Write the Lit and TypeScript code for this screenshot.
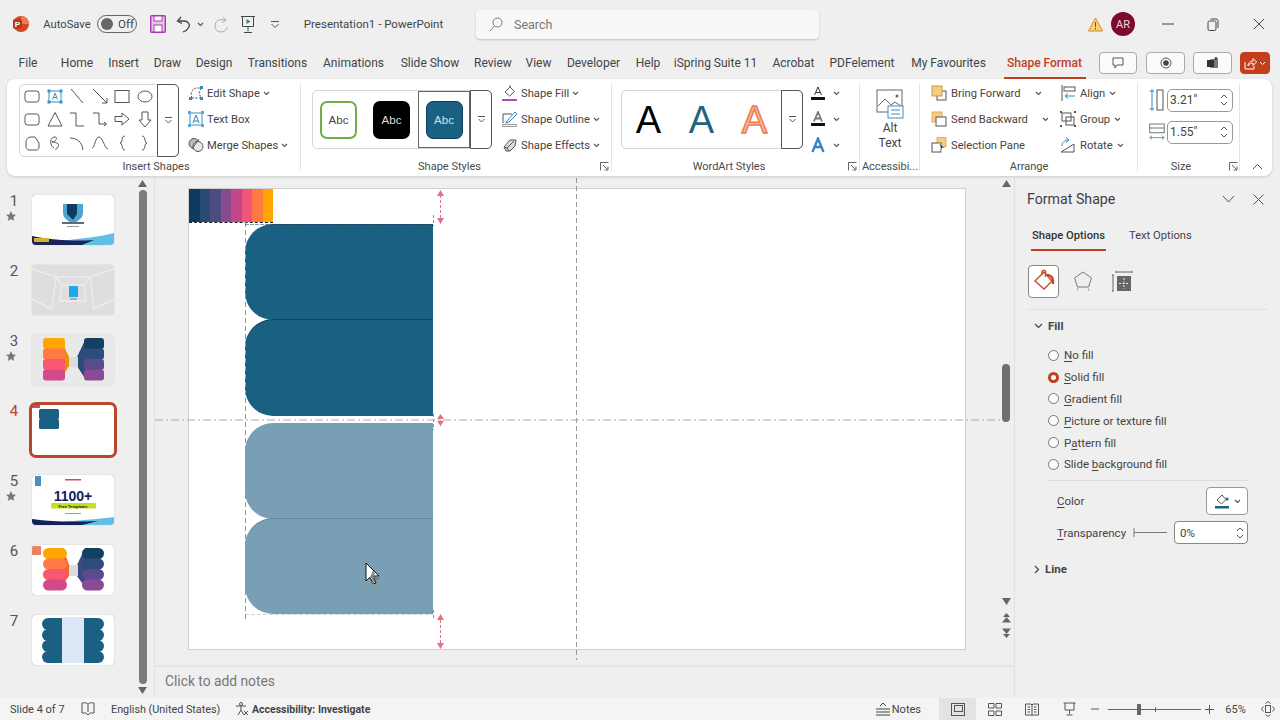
import { LitElement, html, css, svg } from "lit";
import { customElement } from "lit/decorators.js";

const ic = (w: number, h: number, body: unknown) =>
  html`<svg width=${w} height=${h} viewBox="0 0 ${w} ${h}" fill="none" stroke="#555" stroke-width="1">${body}</svg>`;

const caret = html`<svg class="caret" width="7" height="5" viewBox="0 0 7 5" fill="none" stroke="#555" stroke-width="1.1"><path d="M1 1l2.5 2.5L6 1" /></svg>`;
const more = html`<svg width="9" height="9" viewBox="0 0 9 9" fill="none" stroke="#555"><path d="M1 1.5h7M1.5 4l3 3 3-3" /></svg>`;
const launcher = html`<svg class="launch" width="9" height="9" viewBox="0 0 9 9" fill="none" stroke="#666"><path d="M.5 8.5v-8h8M3 3l5 5M8 4.5V8H4.5" /></svg>`;

const shapeIcons = [
  svg`<rect x="2" y="4" width="14" height="11" rx="2.5" />`,
  svg`<rect x="3" y="4" width="12" height="11" stroke="#3b8fc4" /><path d="M6.5 12.5L9 6l2.5 6.5M7.5 10.5h3" stroke="#3b8fc4" /><path d="M1.5 2.5h3v3h-3zM13.5 2.5h3v3h-3zM1.5 13.5h3v3h-3zM13.5 13.5h3v3h-3z" fill="#3b8fc4" stroke="none" />`,
  svg`<path d="M3 2l12 14" />`,
  svg`<path d="M2 2l14 14M16 11v5h-5" />`,
  svg`<rect x="2" y="3.500" width="14" height="12" />`,
  svg`<ellipse cx="9" cy="9.500" rx="7" ry="5.500" />`,
  svg`<rect x="2" y="4" width="14" height="11" rx="2.500" />`,
  svg`<path d="M9 2.500L16 16H2z" />`,
  svg`<path d="M2 3h6v13h8" />`,
  svg`<path d="M2 3h6v11h7M13 12l2.500 2-2.500 2" />`,
  svg`<path d="M2 6.500h7V3l7 6-7 6v-3.500H2z" />`,
  svg`<path d="M6 2h6v8h3l-6 7-6-7h3z" />`,
  svg`<path d="M3 9c0-4 2-6 5-6h4l4 6v4c0 2-1 3-3 3H6c-2 0-3-2-3-4z" />`,
  svg`<path d="M8 14C3 11 4 3 9 3c3 0 1 5-3 5 3 0 8 1 6 5-1 2-3 1-2 3" />`,
  svg`<path d="M2 4c7 0 12 4 13 12" />`,
  svg`<path d="M1 14C4 14 4 3 8 3s5 11 9 12" />`,
  svg`<path d="M12 2c-4 0-2 7-5 7 3 0 1 7 5 7" />`,
  svg`<path d="M6 2c4 0 2 7 5 7-3 0-1 7-5 7" />`,
];

const icons = {
  editShape: ic(16, 16, svg`<path d="M4 13C2 8 4 4 8 3h5l-2 5 2 5z" stroke-dasharray="2 1.500" /><path d="M1 12h3v3H1zM12 1h3v3h-3zM12 12h3v3h-3z" fill="#2f8ac2" stroke="none" />`),
  textBox: ic(16, 16, svg`<rect x="2" y="2" width="12" height="12" stroke="#3b8fc4" /><path d="M5 12l3-8 3 8M6 10h4" stroke="#3b7fb0" /><path d="M0 0h3v3H0zM13 0h3v3h-3zM0 13h3v3H0zM13 13h3v3h-3z" fill="#5aa7d6" stroke="none" />`),
  merge: ic(16, 16, svg`<circle cx="6" cy="6.500" r="5" fill="#bbb" /><circle cx="10" cy="9.500" r="5" fill="#e8e8e8" /><path d="M4 12l7-10" />`),
  fill: ic(16, 16, svg`<path d="M3 7l5-5 4.500 4.500-5 4.500z" /><path d="M8 2V0" /><path d="M0 14h15v2H0z" fill="#b04bb4" stroke="none" />`),
  outline: ic(16, 16, svg`<path d="M1 12V3h9" /><path d="M5 10l8-9 2 2-8 8-3 1z" stroke="#2f8ac2" /><path d="M0.500 13.500h14v2h-14z" stroke="#999" />`),
  effects: ic(16, 16, svg`<path d="M2 10l6-7h6l-1 6-5 5H4z" fill="#ddd" /><path d="M2 10l3 1 2 3M5 11l7-7" />`),
  bring: ic(16, 16, svg`<rect x="6" y="6" width="9" height="9" /><rect x="1" y="1" width="10" height="10" fill="#f4cd85" stroke="#c99a3d" />`),
  send: ic(16, 16, svg`<rect x="1" y="1" width="10" height="10" fill="#f4cd85" stroke="#e2ad55" /><rect x="5" y="6" width="10" height="9" fill="#fff" />`),
  pane: ic(16, 16, svg`<rect x="6" y="0.500" width="9" height="9" fill="#f4cd85" stroke="#e2ad55" /><rect x="1" y="6" width="9" height="9" fill="#fff" /><path d="M8 6l6 5-3 0 0 4z" fill="#444" stroke="#fff" stroke-width=".5" />`),
  align: ic(16, 16, svg`<path d="M2 0v16" /><rect x="4" y="2" width="11" height="4" /><path d="M15 11H5M8 8.500L5 11l3 2.500" stroke="#2f8ac2" />`),
  group: ic(16, 16, svg`<rect x="2" y="2" width="9" height="8" /><rect x="6" y="6" width="8" height="8" /><path d="M0 0h2v2H0zM14 0h2v2h-2zM0 14h2v2H0zM14 14h2v2h-2z" fill="#555" stroke="none" />`),
  rotate: ic(16, 16, svg`<path d="M1 15L14 7v8z" /><path d="M2 9c0-4 3-6 6-6" stroke="#2f8ac2" /><path d="M6 0.500L9 3 6 5.500" stroke="#2f8ac2" />`),
  height: ic(16, 24, svg`<path d="M3 2v20M1 4l2-2.500L5 4M1 20l2 2.500L5 20" stroke="#2f8ac2" /><rect x="8" y="2" width="6" height="20" />`),
  width: ic(20, 22, svg`<rect x="1" y="1" width="18" height="11" /><path d="M1 6h18" /><path d="M1 18h18M4 15.500L1 18l3 2.500M16 15.500l3 2.500-3 2.500" stroke="#2f8ac2" />`),
};

const spin = html`<span class="spin">
  <svg width="8" height="5" viewBox="0 0 8 5" fill="none" stroke="#555"><path d="M1 4l3-3 3 3" /></svg>
  <svg width="8" height="5" viewBox="0 0 8 5" fill="none" stroke="#555"><path d="M1 1l3 3 3-3" /></svg>
</span>`;

const warm = ["#ffa600", "#ff7a45", "#f9566f", "#d24a8c"];
const cool = ["#123f62", "#2d4b7b", "#594b8d", "#8a4a96"];

const thumbs = [
  svg`<path d="M31 9h20v9c0 5-5 8-10 11-5-3-10-6-10-11z" fill="#4aa5d0" /><path d="M35 9h10v10l-4 6-6-6z" fill="#123a5c" /><rect x="30" y="27" width="22" height="2" fill="#667" /><rect x="35" y="31" width="12" height="1" fill="#99a" />
    <path d="M30 46C50 43 68 42 82 38V50H30z" fill="#5fc0e4" /><path d="M0 41C25 46 45 46 62 45L50 50H0z" fill="#1a2456" /><rect x="2" y="43" width="15" height="4" fill="#d8b02c" />`,
  svg`<rect width="82" height="50" fill="#dedede" /><path d="M0 4l24 8h34l24-8M24 12l-4 32M58 12l4 32M0 34l20 10M82 34L62 44M24 12l6 8h22l6-8M30 20l-2 16h26l-2-16" stroke="#ececec" stroke-width="1.500" fill="none" /><rect x="37" y="21" width="9" height="11" fill="#1ea7ea" /><rect x="38" y="33" width="7" height="2" fill="#aaa" />`,
  svg`<rect width="82" height="50" fill="#e9e9e9" />
    <path d="M28 3l9 19v9l-9 14z" fill="#e88e00" /><path d="M54 3l-9 19v9l9 14z" fill="#2d4b7b" />
    ${warm.map((c, i) => svg`<rect x="11" y=${3 + i * 10.5} width="22" height="11" rx="3" fill=${c} />`)}${cool.map((c, i) => svg`<rect x="52" y=${3 + i * 10.5} width="20" height="11" rx="3" fill=${c} />`)}
    <rect x="37" y="22" width="9" height="10" fill="#dcdcdc" />`,
  svg`<rect x="7" y="4" width="20" height="10" rx="1.500" fill="#1a6083" /><rect x="7" y="14" width="20" height="10" rx="1.500" fill="#1a6083" /><rect x="0" y="0" width="8" height="3" fill="#c0488a" />`,
  svg`<rect x="3" y="1" width="6" height="10" fill="#4a8fc0" /><rect x="33" y="4" width="16" height="1.500" fill="#e0455f" /><text x="41" y="26" text-anchor="middle" font-size="14" font-weight="700" font-family="Liberation Sans, sans-serif" fill="#14205c">1100+</text><rect x="19" y="28" width="45" height="5.500" rx="1" fill="#c4e020" /><text x="41" y="32.500" text-anchor="middle" font-size="4" font-weight="700" font-family="Liberation Sans, sans-serif" fill="#223">Free Templates</text><rect x="33" y="38" width="16" height="1" fill="#c88" />
    <path d="M30 47C50 45 68 44 82 42V50H30z" fill="#5fc0e4" /><path d="M0 44C20 47 45 47 66 46L50 50H0z" fill="#14205c" />`,
  svg`<path d="M27 3h4l6 17v11l-10 14z" fill="#f2652a" /><path d="M55 3h-2l-8 17v11l10 14z" fill="#3a4a84" />
    ${warm.map((c, i) => svg`<rect x="11" y=${3 + i * 10.5} width="24" height="11" rx="5.500" fill=${c} />`)}${cool.map((c, i) => svg`<rect x="50" y=${3 + i * 10.5} width="22" height="11" rx="5.500" fill=${c} />`)}
    <rect x="37" y="20" width="9" height="11" fill="#dcdcdc" /><rect x="0" y="1" width="9" height="9" fill="#ee7f62" />`,
  svg`${[0, 1, 2, 3].map((i) => svg`<rect x="10" y=${3 + i * 11} width="26" height="12" rx="6" fill="#1a6083" /><rect x="46" y=${3 + i * 11} width="26" height="12" rx="6" fill="#1a6083" />`)}<rect x="30" y="2" width="22" height="46" fill="#dbe6f6" />`,
];

const stripes = ["#0f3a5f", "#2a4a75", "#4e4b82", "#8a4a92", "#c0488a", "#f0567a", "#ff7a40", "#ffa600"];
const stars = [true, false, true, false, true, false, false];

const tabs = [
  ["File", 50], ["Home", 48], ["Insert", 45], ["Draw", 43], ["Design", 50], ["Transitions", 77],
  ["Animations", 75], ["Slide Show", 78], ["Review", 48], ["View", 43], ["Developer", 67], ["Help", 42],
  ["iSpring Suite 11", 93], ["Acrobat", 63], ["PDFelement", 74], ["My Favourites", 99], ["Shape Format", 93],
] as const;

@customElement("app-root")
class AppRoot extends LitElement {
  static styles = css`
    :host {
      display: block;
      width: 1280px;
      height: 720px;
      overflow: hidden;
      background: #efefef;
      color: #444;
      font-family: Roboto, "Noto Sans", sans-serif;
      font-size: 12px;
    }
    svg { display: block; flex: none; }
    u { text-underline-offset: 2px; }

    .titlebar {
      height: 48px;
      margin-bottom: 1px;
      display: grid;
      grid-template-columns: 42px 50px 50px 32px 20px 12px 30px 24px 30px 167px 19px 343px 260px 32px 24px 66px 24px 13px 42px;
      align-items: center;
      justify-items: center;
      font-size: 11.5px;
    }
    .autosave { font-size: 11.200px; }
    .search {
      justify-self: stretch;
      height: 29px;
      background: #f8f8f8;
      border-radius: 4px;
      box-shadow: 0 1px 2px rgba(0, 0, 0, 0.2);
      display: flex;
      align-items: center;
      gap: 11px;
      padding-left: 13px;
      color: #777;
      font-size: 12.500px;
    }
    .toggle {
      width: 40px;
      height: 18px;
      border: 1px solid #666;
      border-radius: 10px;
      display: flex;
      align-items: center;
      gap: 5px;
      padding-left: 3px;
      box-sizing: border-box;
      font-size: 11.5px;
    }
    .toggle i { width: 12px; height: 12px; background: #666; border-radius: 50%; }
    .avatar {
      width: 24px;
      height: 24px;
      border-radius: 50%;
      background: #7c0a2e;
      color: #e9d9de;
      font-size: 11px;
      display: flex;
      align-items: center;
      justify-content: center;
    }

    .tabrow { height: 30px; display: flex; align-items: flex-start; padding-left: 3px; }
    .tab { text-align: center; height: 30px; line-height: 28px; position: relative; white-space: nowrap; }
    .tab.active { color: #c0401f; font-weight: 500; }
    .tab.active::after {
      content: "";
      position: absolute;
      left: 6px;
      right: 5px;
      bottom: 0;
      height: 2px;
      background: #c0401f;
    }
    .topbtn {
      height: 22px;
      margin-top: 3px;
      background: #fbfbfb;
      border: 1px solid #a9a9a9;
      border-radius: 4px;
      box-sizing: border-box;
      display: flex;
      align-items: center;
      justify-content: center;
    }
    .b1 { width: 38px; margin-left: 8px; }
    .b2 { width: 39px; margin-left: 9px; }
    .b3 { width: 39px; margin-left: 8px; }
    .share { width: 30px; margin-left: 8px; background: #c43e1c; border-color: #c43e1c; gap: 2px; }

    .ribbon {
      margin: 0 8px 0 7px;
      height: 97px;
      background: #fff;
      border-radius: 8px;
      box-shadow: 0 1px 3px rgba(0, 0, 0, 0.16);
      display: flex;
      position: relative;
    }
    .group { position: relative; display: flex; flex-direction: column; flex: none; }
    .group::after {
      content: "";
      position: absolute;
      right: 0;
      top: 4px;
      bottom: 5px;
      width: 1px;
      background: #e4e4e4;
    }
    .g1 { width: 294px; }
    .g2 { width: 311px; }
    .g3 { width: 248px; }
    .g4 { width: 60px; }
    .g5 { width: 218px; }
    .g6 { width: 102px; }
    .gbody { height: 80px; display: flex; }
    .glabel { text-align: center; line-height: 16px; font-size: 11px; color: #4a4a4a; white-space: nowrap; }
    .g1 .glabel { padding-left: 4px; }
    .g2 .glabel, .g3 .glabel { padding-right: 14px; }
    .g6 .glabel { padding-right: 16px; }
    .launch { position: absolute; right: 3px; bottom: 5px; }
    .g6 .launch { right: 2px; }
    .collapse { position: absolute; right: 9px; bottom: 6px; }

    .gallery {
      border: 1px solid #d5d5d5;
      border-radius: 5px;
      box-sizing: border-box;
      display: flex;
      flex: none;
    }
    .g-shapes { margin: 5px 0 0 12px; width: 160px; height: 73px; }
    .shape-grid {
      width: 137px;
      margin-top: -1px;
      padding-left: 1px;
      display: grid;
      grid-template-columns: repeat(6, 22.500px);
      grid-auto-rows: 23.500px;
      align-items: center;
      justify-items: center;
    }
    .more {
      margin: -1px -1px -1px auto;
      width: 22px;
      flex: none;
      align-self: stretch;
      border: 1px solid #555;
      border-radius: 0 5px 5px 0;
      box-sizing: border-box;
      display: flex;
      align-items: center;
      justify-content: center;
    }
    .cmds { display: flex; flex-direction: column; margin-top: 1px; font-size: 11.200px; }
    .c1 { margin-left: 9px; }
    .c2 { margin-left: 10px; }
    .cmd { height: 26px; display: flex; align-items: center; gap: 3px; white-space: nowrap; }
    .far { margin-left: 10px; }
    .c5a { margin-left: 11px; width: 129px; }
    .c5 .cmd, .c5a .cmd { gap: 4px; }

    .g-styles { margin: 11px 0 0 11px; width: 180px; height: 59px; align-items: center; }
    .swatch {
      width: 37px;
      height: 38px;
      box-sizing: border-box;
      border-radius: 7px;
      display: flex;
      align-items: center;
      justify-content: center;
      font-family: "Liberation Sans", sans-serif;
      font-size: 11.500px;
      flex: none;
    }
    .sw1 { margin-left: 7px; border: 2px solid #70ad47; color: #444; }
    .sw2 { margin-left: 16px; background: #000; color: #ddd; }
    .sel {
      margin-left: 8px;
      width: 52px;
      height: 57px;
      border: 1px solid #666;
      box-sizing: border-box;
      display: flex;
      align-items: center;
      justify-content: center;
      flex: none;
    }
    .sw3 { background: #1a6083; border: 1px solid #123f5c; color: #cfe0ea; }

    .g-word { margin: 11px 0 0 9px; width: 182px; height: 59px; align-items: center; }
    .wa {
      width: 53px;
      flex: none;
      text-align: center;
      font-family: "Liberation Sans", sans-serif;
      font-size: 38px;
      line-height: 40px;
    }
    .wa1 { color: #000; }
    .wa2 { color: #1f6480; }
    .wa3 { color: #f9b79b; -webkit-text-stroke: 1.500px #ed7d50; }
    .colors { margin: 1px 0 0 8px; }
    .colors .cmd { gap: 8px; }
    .alt {
      width: 100%;
      display: flex;
      flex-direction: column;
      align-items: center;
      padding-top: 10px;
      line-height: 15px;
      gap: 2px;
      text-align: center;
    }
    .size { margin: 9px 0 0 11px; display: flex; flex-direction: column; gap: 8px; }
    .sizerow { display: flex; align-items: center; gap: 2px; height: 24px; }
    .sizerow > svg { width: 16px; }
    .input {
      width: 66px;
      height: 23px;
      box-sizing: border-box;
      border: 1px solid #999;
      border-radius: 5px;
      display: flex;
      align-items: center;
      justify-content: space-between;
      padding: 0 4px 0 2px;
      font-size: 12px;
    }
    .spin { display: flex; flex-direction: column; gap: 2px; }

    .main { height: 522px; display: flex; }

    .thumbs { width: 155px; flex: none; position: relative; border-right: 1px solid #e0e0e0; box-sizing: border-box; }
    .tlist { padding-top: 19px; display: flex; flex-direction: column; gap: 20px; }
    .trow { display: flex; height: 50px; }
    .tnum { width: 32px; text-align: center; padding-right: 4px; box-sizing: border-box; font-size: 15px; line-height: 13px; color: #555; }
    .tnum.cur { color: #c0401f; }
    .tnum svg { margin: 3px auto 0 6px; }
    .thumb {
      width: 82px;
      height: 50px;
      background: #fff;
      border-radius: 4px;
      box-shadow: 0 0 1px rgba(0, 0, 0, 0.4);
      overflow: hidden;
    }
    .thumb.cur { outline: 3px solid #b7472a; box-shadow: none; overflow: visible; }
    .tscroll {
      position: absolute;
      left: 137px;
      top: 4px;
      bottom: 4px;
      width: 11px;
      display: flex;
      flex-direction: column;
      align-items: center;
      justify-content: space-between;
    }
    .tscroll i { width: 8px; flex: 1; margin: 3px 0; background: #7c7c7c; border-radius: 4px; }

    .edit { width: 859px; flex: none; position: relative; border-right: 1px solid #e0e0e0; }
    .slide {
      position: relative;
      margin: 13px 0 0 34px;
      width: 776px;
      height: 460px;
      background: #fff;
      box-shadow: 0 0 0 1px #d0d0d0;
    }
    .strip { position: absolute; left: 0; top: 0; display: flex; height: 33px; border-bottom: 1px dashed #222; }
    .strip i { width: 10.500px; }
    .stack { padding: 35px 0 0 56px; display: flex; flex-direction: column; }
    .sh { width: 188px; height: 96px; border-radius: 28px 0 0 28px; }
    .dark { background: #1a6083; }
    .dark + .dark { box-shadow: 0 -1px 0 #0f4763; }
    .light { background: #789fb4; }
    .light + .light { box-shadow: 0 -1px 0 #5f8aa1; height: 95px; }
    .gap { height: 7px; }
    .notes {
      position: absolute;
      left: 0;
      right: 0;
      bottom: 0;
      height: 33px;
      border-top: 2px solid #e4e4e4;
      padding: 5px 0 0 10px;
      box-sizing: border-box;
      font-size: 13.800px;
      line-height: 18px;
      color: #777;
    }
    .overlay { position: absolute; left: 0; top: 0; pointer-events: none; }
    .escroll {
      position: absolute;
      left: 847px;
      top: 4px;
      width: 8px;
      display: flex;
      flex-direction: column;
      align-items: center;
    }
    .escroll i { width: 8px; height: 58px; margin: 177px 0 176px; background: #6f6f6f; border-radius: 4px; }
    .pgup { margin-top: 8px; }
    .pgdn { margin-top: 5px; }

    .pane { flex: 1; padding-left: 12px; position: relative; }
    .ptitle { display: flex; align-items: center; height: 46px; font-size: 14.200px; color: #3f3f3f; }
    .ptitle svg:first-of-type { margin-left: auto; }
    .ptitle svg + svg { margin: 0 16px 0 18px; }
    .ptabs { display: flex; margin: -1px 0 0 4px; height: 33px; gap: 22px; font-size: 11.200px; }
    .ptab { padding: 8px 1px 0; height: 25px; box-sizing: border-box; }
    .ptab.on { height: 30px; border-bottom: 2px solid #c0401f; color: #333; font-weight: 500; }
    .picons { display: flex; align-items: center; height: 34px; margin-top: 10px; gap: 13px; }
    .picons > svg:last-child { margin-left: 4px; }
    .pbtn {
      margin-left: 1px;
      width: 31px;
      height: 33px;
      background: #fff;
      border: 1px solid #888;
      border-radius: 4px;
      box-sizing: border-box;
      display: flex;
      align-items: center;
      justify-content: center;
    }
    .rule { height: 1px; margin: 11px 12px 0 0; background: #e0e0e0; }
    .phead { display: flex; align-items: center; gap: 5px; font-weight: 700; font-size: 11.500px; height: 18px; margin: 7px 0 0 7px; }
    .radios { margin: 9.500px 0 0 21px; display: flex; flex-direction: column; font-size: 11.500px; }
    .radio { display: flex; align-items: center; gap: 5px; height: 21.800px; }
    .radio i { width: 11px; height: 11px; border: 1px solid #777; border-radius: 50%; background: #fbfbfb; box-sizing: border-box; flex: none; }
    .radio i.on { border: 3px solid #c0401f; background: #fff; }
    .rule2 { height: 1px; margin: 5px 32px 0 21px; background: #dcdcdc; }
    .prow { display: flex; align-items: center; margin-left: 30px; width: 191px; font-size: 11.500px; }
    .colorrow { height: 28px; margin-top: 6px; justify-content: space-between; }
    .colorbtn {
      width: 42px;
      height: 28px;
      border: 1px solid #999;
      border-radius: 4px;
      background: #fff;
      box-sizing: border-box;
      display: flex;
      align-items: center;
      justify-content: center;
      gap: 4px;
    }
    .transrow { height: 23px; margin-top: 6px; }
    .translabel { width: 66px; flex: none; white-space: nowrap; }
    .transrow > svg { margin-left: 10px; }
    .transinput {
      margin-left: 7px;
      width: 74px;
      flex: none;
      height: 23px;
      border: 1px solid #888;
      border-radius: 4px;
      background: #fff;
      box-sizing: border-box;
      display: flex;
      align-items: center;
      justify-content: space-between;
      padding: 0 3px 0 5px;
    }
    .lineh { margin-top: 16px; }

    .status {
      height: 22px;
      background: #f4f4f4;
      display: grid;
      grid-template-columns: 78px 20px 13px 123px 16px 140px 549px 37px 37px 38px 37px 14px 101px 12px 41px 24px;
      align-items: center;
      justify-items: center;
      font-size: 11px;
      color: #444;
    }
    .status > span { justify-self: start; white-space: nowrap; }
    .status > span.pct { justify-self: center; }
    .st1 { padding-left: 10px; }
    .lang { font-size: 10.800px; }
    .notesbtn { display: flex; align-items: center; gap: 1px; justify-self: end !important; padding-right: 18px; }
    .view { height: 22px; width: 100%; display: flex; align-items: center; justify-content: center; }
    .view.on { background: #e3e3e3; }
    .st-bold { font-weight: 700; font-size: 10.500px; padding-left: 2px; }
    .track { width: 93px; margin-left: 3px; height: 1px; background: #666; position: relative; }
    .track i { position: absolute; left: 29px; top: -5px; width: 4px; height: 11px; background: #666; }
    .track b { position: absolute; left: 47px; top: -2px; width: 1px; height: 5px; background: #666; }
  `;

  renderOverlay() {
    const pink = "#e0708c";
    return html`<svg class="overlay" width="859" height="490" viewBox="155 176 859 490" fill="none">
      <path d="M155 420H1000" stroke="#aaa" stroke-dasharray="8 3 2 3" />
      <path d="M576.500 178V660" stroke="#999" stroke-dasharray="5 3" />
      <path d="M245.500 222V622" stroke=${pink} stroke-dasharray="5 3" />
      <path d="M245 224.500H433" stroke="#234" stroke-dasharray="4 1" opacity=".5" />
      <path d="M245 614.500H433" stroke="#999" stroke-dasharray="4 2" opacity=".4" />
      <path d="M433.500 215V226M433.500 414V430M433.500 610V618" stroke=${pink} stroke-dasharray="3 2" />
      <path d="M440.500 195V220M440.500 415V426M440.500 620V644" stroke=${pink} stroke-dasharray="3 2" />
      <g fill=${pink}>
        <path d="M437 196l3.500-6 3.500 6zM437 218l3.500 6 3.500-6z" />
        <path d="M437 419l3.500-5 3.500 5zM437 421l3.500 5 3.500-5z" />
        <path d="M437 620l3.500-6 3.500 6zM437 643l3.500 6 3.500-6z" />
      </g>
      <path d="M366 563V581L370 577 373 584 376 583 373 576 379 576z" fill="#fff" stroke="#111" />
      <path d="M373 571l2 3h-1.500v3h3v-1.500l3 2-3 2v-1.500h-3v3h1.500l-2 3-2-3h1.500v-3h-3" fill="#888" stroke="#666" stroke-width=".5" />
      <path d="M366 584h14v5h-14z" fill="#8a9aa4" opacity=".35" />
    </svg>`;
  }

  render() {
    return html`
      <div class="titlebar">
        <svg width="18" height="18" viewBox="0 0 18 18"><circle cx="9" cy="9" r="8" fill="#d1492a" /><path d="M9 1a8 8 0 018 8H9z" fill="#ee7a50" /><rect x="1" y="4.500" width="9" height="9" rx="1" fill="#b7371a" /><text x="5.500" y="12" text-anchor="middle" font-size="8" font-weight="700" fill="#fff" font-family="Liberation Sans, sans-serif">P</text></svg>
        <span class="autosave">AutoSave</span>
        <div class="toggle"><i></i>Off</div>
        <svg width="16" height="18" viewBox="0 0 16 18"><rect x=".7" y=".7" width="14.600" height="16.600" rx="1" fill="#e9c3ec" stroke="#a73bb0" stroke-width="1.400" /><rect x="4" y="1" width="8" height="5" fill="#fff" stroke="#a73bb0" /><rect x="4" y="10" width="8" height="7" fill="#fff" stroke="#a73bb0" /></svg>
        ${ic(16, 17, svg`<path d="M5 1L1.500 5 6 7.500" stroke="#444" stroke-width="1.300" /><path d="M2 5h6c4 0 6 3 5 6-1 2-3 4-6 5" stroke="#444" stroke-width="1.300" />`)}
        ${caret}
        ${ic(16, 17, svg`<path d="M10 1l3 3.500-4 2" stroke="#aaa" /><path d="M13 4.500C7 2 2 5 2 10c0 4 3 6 6 6 4 0 6-3 6-5" stroke="#aaa" />`)}
        ${ic(16, 19, svg`<path d="M1 1.500h14M2.500 1.500v10h11v-10M8 11.500v5M4 17.500h8" stroke="#444" /><path d="M6.500 4l4 2.500-4 2.500z" fill="#2e8b57" stroke="none" />`)}
        ${ic(10, 9, svg`<path d="M1 1.500h8M1.500 4l3.500 3.500L8.500 4" stroke="#555" />`)}
        <span>Presentation1 - PowerPoint</span>
        <span></span>
        <div class="search">
          ${ic(14, 15, svg`<circle cx="8.500" cy="5.500" r="4.500" stroke="#777" /><path d="M5.500 9L1 14" stroke="#777" />`)}
          Search
        </div>
        <span></span>
        <svg width="15" height="15" viewBox="0 0 15 15"><path d="M7.500 1L14.500 14H.5z" fill="#fbd27a" stroke="#d68a1e" /><path d="M7.500 5v5M7.500 11v1.500" stroke="#555" /></svg>
        <div class="avatar">AR</div>
        ${ic(12, 2, svg`<path d="M0 1h12" stroke="#444" />`)}
        ${ic(12, 13, svg`<rect x="1" y="3" width="8" height="9.500" rx="1.500" stroke="#444" /><path d="M3.500 1H9c1.500 0 2 1 2 2v7" stroke="#444" />`)}
        <span></span>
        ${ic(12, 12, svg`<path d="M1 1l10 10M11 1L1 11" stroke="#444" />`)}
      </div>

      <div class="tabrow">
        ${tabs.map(
          ([t, w]) => html`<div class="tab ${t === "Shape Format" ? "active" : ""}" style="width:${w}px">${t}</div>`
        )}
        <div class="topbtn b1">${ic(12, 12, svg`<path d="M1 1h10v7H5l-2 3V8H1z" stroke="#555" />`)}</div>
        <div class="topbtn b2"><svg width="12" height="12" viewBox="0 0 12 12" fill="none"><circle cx="6" cy="6" r="5" stroke="#555" /><circle cx="6" cy="6" r="2.800" fill="#444" /></svg></div>
        <div class="topbtn b3"><svg width="12" height="12" viewBox="0 0 12 12"><rect x="3" y="2" width="8" height="9" rx="1" fill="#777" /><rect x="0" y="3" width="7" height="7" fill="#333" /><circle cx="9" cy="1.500" r="1.500" fill="#444" /></svg></div>
        <div class="topbtn share">
          <svg width="13" height="13" viewBox="0 0 13 13" fill="none" stroke="#fff"><path d="M1 5v7h9V9M4 9c0-4 3-5 5-5V1.500L12.500 5 9 8.500V6C7 6 5 7 4 9z" /></svg>
          <svg width="7" height="5" viewBox="0 0 7 5" fill="none" stroke="#fff"><path d="M1 1l2.500 2.500L6 1" /></svg>
        </div>
      </div>

      <div class="ribbon">
        <div class="group g1">
          <div class="gbody">
            <div class="gallery g-shapes">
              <div class="shape-grid">${shapeIcons.map((s) => ic(18, 18, s))}</div>
              <div class="more">${more}</div>
            </div>
            <div class="cmds c1">
              <div class="cmd">${icons.editShape}Edit Shape${caret}</div>
              <div class="cmd">${icons.textBox}Text Box</div>
              <div class="cmd">${icons.merge}Merge Shapes${caret}</div>
            </div>
          </div>
          <div class="glabel">Insert Shapes</div>
        </div>

        <div class="group g2">
          <div class="gbody">
            <div class="gallery g-styles">
              <div class="swatch sw1">Abc</div>
              <div class="swatch sw2">Abc</div>
              <div class="sel"><div class="swatch sw3">Abc</div></div>
              <div class="more">${more}</div>
            </div>
            <div class="cmds c2">
              <div class="cmd">${icons.fill}Shape Fill${caret}</div>
              <div class="cmd">${icons.outline}Shape Outline${caret}</div>
              <div class="cmd">${icons.effects}Shape Effects${caret}</div>
            </div>
          </div>
          <div class="glabel">Shape Styles</div>
          ${launcher}
        </div>

        <div class="group g3">
          <div class="gbody">
            <div class="gallery g-word">
              <div class="wa wa1">A</div>
              <div class="wa wa2">A</div>
              <div class="wa wa3">A</div>
              <div class="more">${more}</div>
            </div>
            <div class="cmds colors">
              <div class="cmd">${ic(14, 16, svg`<path d="M3.500 10L7 2l3.500 8M5 7.500h4" stroke="#333" /><path d="M0 12h14v3H0z" fill="#111" stroke="none" />`)}${caret}</div>
              <div class="cmd">${ic(14, 16, svg`<path d="M3 10.500L7 1l4 9.500M4.500 7.500h5" stroke="#777" stroke-width="1.800" /><path d="M0 12h14v3H0z" fill="#111" stroke="none" />`)}${caret}</div>
              <div class="cmd">${ic(14, 16, svg`<path d="M1.500 15L7 1.500 12.500 15M4 10h6" stroke="#3c82c8" stroke-width="2.400" />`)}${caret}</div>
            </div>
          </div>
          <div class="glabel">WordArt Styles</div>
          ${launcher}
        </div>

        <div class="group g4">
          <div class="gbody">
            <div class="alt">
              ${ic(28, 30, svg`<rect x="1" y="1" width="25" height="22" stroke="#666" /><path d="M2 17l7-7 6 6 4-3 6 4" stroke="#666" /><circle cx="21" cy="7" r="1.500" fill="#666" stroke="none" /><rect x="12" y="17" width="15" height="12" fill="#fff" stroke="#3b8fc4" /><path d="M15 21h9M15 25h9" stroke="#3b8fc4" />`)}
              <div>Alt<br />Text</div>
            </div>
          </div>
          <div class="glabel">Accessibi...</div>
        </div>

        <div class="group g5">
          <div class="gbody">
            <div class="cmds c5a">
              <div class="cmd">${icons.bring}Bring Forward<span class="far">${caret}</span></div>
              <div class="cmd">${icons.send}Send Backward<span class="far">${caret}</span></div>
              <div class="cmd">${icons.pane}Selection Pane</div>
            </div>
            <div class="cmds c5">
              <div class="cmd">${icons.align}Align${caret}</div>
              <div class="cmd">${icons.group}Group${caret}</div>
              <div class="cmd">${icons.rotate}Rotate${caret}</div>
            </div>
          </div>
          <div class="glabel">Arrange</div>
        </div>

        <div class="group g6">
          <div class="gbody">
            <div class="size">
              <div class="sizerow">${icons.height}<div class="input">3.21"${spin}</div></div>
              <div class="sizerow">${icons.width}<div class="input">1.55"${spin}</div></div>
            </div>
          </div>
          <div class="glabel">Size</div>
          ${launcher}
        </div>

        <svg class="collapse" width="11" height="7" viewBox="0 0 11 7" fill="none" stroke="#555"><path d="M1 6l4.500-4.500L10 6" /></svg>
      </div>

      <div class="main">
        <div class="thumbs">
          <div class="tlist">
            ${thumbs.map(
              (t, i) => html`<div class="trow">
                <div class="tnum ${i === 3 ? "cur" : ""}">
                  ${i + 1}
                  ${stars[i]
                    ? html`<svg width="10" height="10" viewBox="0 0 10 10"><path d="M5 0l1.500 3.400L10 3.800 7.400 6.200 8.100 10 5 8 1.900 10l.7-3.800L0 3.800l3.500-.4z" fill="#777" /></svg>`
                    : ""}
                </div>
                <div class="thumb ${i === 3 ? "cur" : ""}">
                  <svg width="82" height="50" viewBox="0 0 82 50">${t}</svg>
                </div>
              </div>`
            )}
          </div>
          <div class="tscroll">
            <svg width="9" height="7" viewBox="0 0 9 7"><path d="M4.500 0L9 7H0z" fill="#666" /></svg>
            <i></i>
            <svg width="9" height="7" viewBox="0 0 9 7"><path d="M4.500 7L9 0H0z" fill="#666" /></svg>
          </div>
        </div>

        <div class="edit">
          <div class="slide">
            <div class="stack">
              <div class="sh dark"></div>
              <div class="sh dark"></div>
              <div class="gap"></div>
              <div class="sh light"></div>
              <div class="sh light"></div>
            </div>
            <div class="strip">${stripes.map((c) => html`<i style="background:${c}"></i>`)}</div>
          </div>
          ${this.renderOverlay()}
          <div class="escroll">
            <svg width="9" height="7" viewBox="0 0 9 7"><path d="M4.500 0L9 7H0z" fill="#666" /></svg>
            <i></i>
            <svg width="9" height="7" viewBox="0 0 9 7"><path d="M4.500 7L9 0H0z" fill="#666" /></svg>
            <svg class="pgup" width="9" height="10" viewBox="0 0 9 10"><path d="M4.500 0L8 4H1zM4.500 4L9 9.500H0z" fill="#666" /></svg>
            <svg class="pgdn" width="9" height="10" viewBox="0 0 9 10"><path d="M4.500 10L8 6H1zM4.500 6L9 .5H0z" fill="#666" /></svg>
          </div>
          <div class="notes">Click to add notes</div>
        </div>

        <div class="pane">
          <div class="ptitle">
            Format Shape
            ${ic(13, 8, svg`<path d="M1 1l5.500 6L12 1" stroke="#555" />`)}
            ${ic(11, 11, svg`<path d="M.5.500l10 10M10.500.500l-10 10" stroke="#555" />`)}
          </div>
          <div class="ptabs">
            <div class="ptab on">Shape Options</div>
            <div class="ptab">Text Options</div>
          </div>
          <div class="picons">
            <div class="pbtn">
              <svg width="26" height="26" viewBox="0 0 26 26" fill="none" stroke="#c9482a" stroke-width="1.400"><path d="M4 13l9-9 8 9-8 8z" /><path d="M11 7V3.500a1.800 1.800 0 013.500 0V9" /><path d="M16 7c3 0 6 2 6 6v3" stroke-width="2.400" /></svg>
            </div>
            <svg width="22" height="22" viewBox="0 0 22 22" fill="none" stroke="#777"><path d="M11 2l8.500 6-3 9h-11l-3-9z" /><path d="M5 21l1-3M17 21l-1-3" stroke="#aaa" /></svg>
            <svg width="22" height="22" viewBox="0 0 22 22" fill="none" stroke="#666"><path d="M1 5h2M2 5v16M1 21h2M5 1v2M5 2h16M21 1v2" /><rect x="6" y="6" width="14" height="15" fill="#666" stroke="none" /><path d="M13 8v11M8 13.500h10" stroke="#eee" stroke-dasharray="2 1.500" /></svg>
          </div>
          <div class="rule"></div>
          <div class="phead">
            ${ic(9, 6, svg`<path d="M1 1l3.500 3.500L8 1" stroke="#444" stroke-width="1.200" />`)}
            Fill
          </div>
          <div class="radios">
            <div class="radio"><i></i><span><u>N</u>o fill</span></div>
            <div class="radio"><i class="on"></i><span><u>S</u>olid fill</span></div>
            <div class="radio"><i></i><span><u>G</u>radient fill</span></div>
            <div class="radio"><i></i><span><u>P</u>icture or texture fill</span></div>
            <div class="radio"><i></i><span>P<u>a</u>ttern fill</span></div>
            <div class="radio"><i></i><span>Slide <u>b</u>ackground fill</span></div>
          </div>
          <div class="rule2"></div>
          <div class="prow colorrow">
            <span><u>C</u>olor</span>
            <div class="colorbtn">
              ${ic(16, 16, svg`<path d="M3 7l5-5 4 4.500-4.500 4.500z" stroke="#555" /><circle cx="13" cy="6" r="1.500" fill="#1a6083" stroke="none" /><path d="M1 13h14v2.500H1z" fill="#1a6083" stroke="none" />`)}
              ${caret}
            </div>
          </div>
          <div class="prow transrow">
            <span class="translabel"><u>T</u>ransparency</span>
            ${ic(34, 9, svg`<path d="M1 0v9M1 4.500h33" stroke="#777" />`)}
            <div class="transinput">0%${spin}</div>
          </div>
          <div class="phead lineh">
            ${ic(6, 9, svg`<path d="M1 1l3.500 3.500L1 8" stroke="#444" stroke-width="1.200" />`)}
            Line
          </div>
        </div>
      </div>

      <div class="status">
        <span class="st1">Slide 4 of 7</span>
        ${ic(14, 14, svg`<path d="M1 1c2-.5 4-.5 6 1 2-1.500 4-1.500 6-1v10H9l-2 2-2-2H1zM7 2v8" stroke="#555" />`)}
        <span></span>
        <span class="lang">English (United States)</span>
        ${ic(14, 14, svg`<circle cx="6" cy="2" r="1.500" stroke="#555" /><path d="M1 4h10M6 4v4L3 13M6 8l3 5M9 9l4 4M13 9l-4 4" stroke="#555" />`)}
        <span class="st-bold">Accessibility: Investigate</span>
        <span class="notesbtn">
          ${ic(16, 14, svg`<path d="M1 7h14M1 10h14M1 13h14M5 4l3-3 3 3" stroke="#444" />`)}
          Notes
        </span>
        <div class="view on">${ic(14, 13, svg`<rect x=".5" y=".5" width="13" height="12" stroke="#555" /><rect x="3.500" y="2.500" width="8" height="6" stroke="#555" />`)}</div>
        <div class="view">${ic(14, 13, svg`<path d="M.5.500h5.500v4.500H.5zM8 .5h5.500v4.500H8zM.5 8h5.500v4.500H.5zM8 8h5.500v4.500H8z" stroke="#555" />`)}</div>
        <div class="view">${ic(14, 13, svg`<path d="M.5 1h5.500l1 1 1-1h5.500v11H8l-1 .5L6 12H.5zM7 2v10M2.500 4H5M2.500 6.500H5M2.500 9H5M9 4h2.500M9 6.500h2.500M9 9h2.500" stroke="#555" />`)}</div>
        <div class="view">${ic(13, 14, svg`<path d="M.5 1h12M2 1v7h9V1M6.500 8v4M3.500 13h6" stroke="#555" />`)}</div>
        ${ic(8, 2, svg`<path d="M0 1h8" stroke="#555" />`)}
        <div class="track"><i></i><b></b></div>
        ${ic(9, 9, svg`<path d="M0 4.500h9M4.500 0v9" stroke="#555" />`)}
        <span class="pct">65%</span>
        ${ic(14, 16, svg`<rect x="4.500" y="4.500" width="5" height="7" stroke="#555" /><path d="M4.500 2.500L7 .5l2.500 2M4.500 13.500l2.500 2 2.500-2M2.500 5.500L.5 8l2 2.500M11.500 5.500L13.500 8l-2 2.500" stroke="#555" />`)}
      </div>
    `;
  }
}
